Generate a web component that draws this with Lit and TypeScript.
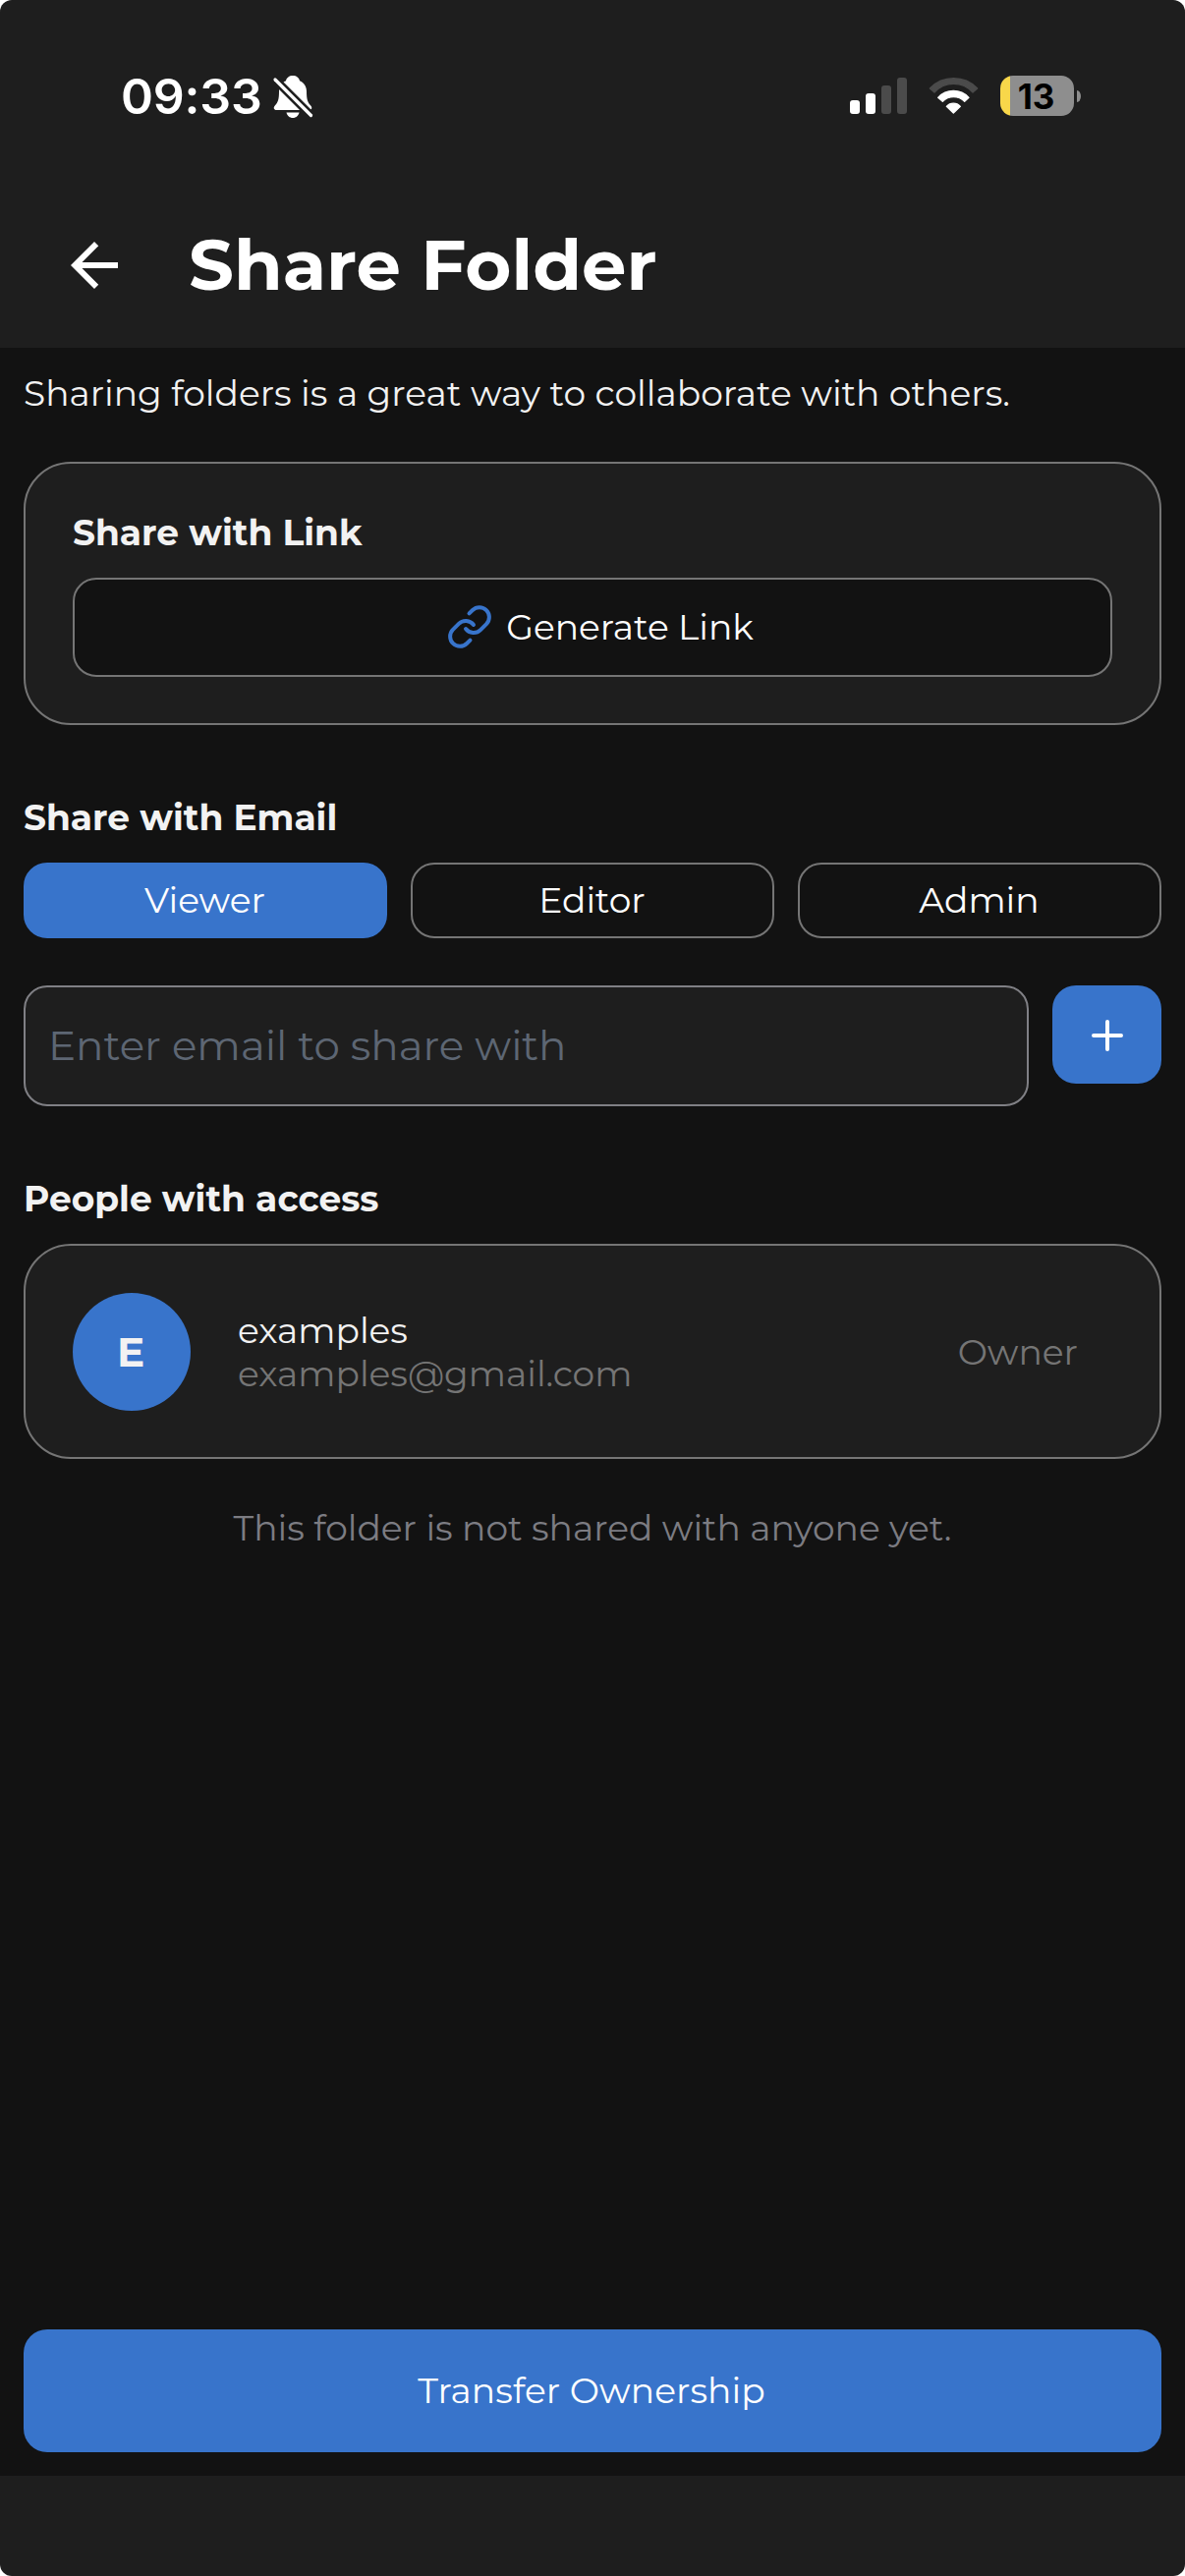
import { LitElement, html, svg, css } from "lit";
import { customElement, state } from "lit/decorators.js";

@customElement("app-root")
export class AppRoot extends LitElement {
  static styles = css`
    :host { display: block; }
    .page { height: 2622px; overflow: hidden; background: #fff; }
    .screen {
      box-sizing: border-box; width: 1206px; height: 2622px; display: flex; flex-direction: column;
      background: #1e1e1e; border-radius: 12px; overflow: hidden;
      font: 400 36px/44px "Montserrat", "Inter", sans-serif; color: #fff;
    }

    /* Status bar */
    .status {
      height: 194px; box-sizing: border-box; padding: 66px 106px 0 123px; flex: none;
      display: flex; align-items: flex-start; justify-content: space-between;
    }
    .clock { display: flex; align-items: center; height: 63px; }
    .time { font: 600 50px/63px "Inter", sans-serif; letter-spacing: -0.2px; width: 154px; padding-top: 2px; }
    .bell { display: block; width: 42px; height: 46px; }
    .indicators { display: flex; align-items: center; height: 63px; gap: 22px; }
    .indicators svg { display: block; }
    .power { display: flex; align-items: center; gap: 3px; }
    .battery {
      width: 75px; height: 41px; border-radius: 13px; display: flex; align-items: center; justify-content: center;
      background: linear-gradient(90deg, #f8d74a 0 10px, #8e8e8e 10px);
      font: 700 35px/41px "Inter", sans-serif; color: #000; box-sizing: border-box; padding: 1px 2px 0 0;
    }
    .nub { width: 4px; height: 12px; border-radius: 0 4px 4px 0 / 0 6px 6px 0; background: #8e8e8e; }

    /* Title bar */
    .header { height: 160px; flex: none; display: flex; align-items: flex-start; padding: 31px 60px 0; gap: 60px; box-sizing: border-box; }
    .back { width: 72px; height: 72px; margin-top: 9px; display: block; }
    h1 { margin: 0; font: inherit; font-weight: 700; font-size: 72px; line-height: 88px; }

    /* Content */
    main { flex: 1; display: flex; flex-direction: column; background: #121212; padding: 24px; min-height: 0; }
    .intro, h2 { color: #f2f2f2; }
    .intro { margin: 0 0 48px; letter-spacing: 0.03px; }
    h2 { margin: 0 0 24px; font: inherit; font-weight: 700; }
    .card { box-sizing: border-box; border: 2px solid #757575; border-radius: 48px; background: #1e1e1e; padding: 48px; }
    .linkcard { height: 268px; margin-bottom: 72px; }
    .pill {
      box-sizing: border-box; display: flex; align-items: center; justify-content: center;
      border: 2px solid #757575; border-radius: 24px; background: #121212; color: #fff; padding-bottom: 2px;
    }
    .generate { height: 101px; gap: 13px; padding-left: 15px; }
    .generate svg { width: 48px; height: 48px; display: block; }
    .roles { display: grid; grid-template-columns: repeat(3, 1fr); gap: 24px; margin-bottom: 48px; }
    .role { height: 77px; padding-right: 1px; }
    .role.on { background: #3874cb; border-color: #3874cb; }
    .invite { display: flex; gap: 24px; align-items: flex-start; margin-bottom: 72px; }
    .field {
      flex: 1; box-sizing: border-box; height: 123px; border: 2px solid #808085; border-radius: 24px;
      background: #1e1e1e; padding: 0 23px 2px; display: flex; align-items: center; font-size: 42px; color: #5d6673;
    }
    .add {
      width: 111px; height: 100px; border-radius: 24px; background: #3874cb;
      display: flex; align-items: center; justify-content: center; padding-top: 1px; box-sizing: border-box;
    }
    .add svg { width: 48px; height: 48px; display: block; }
    .person { display: flex; align-items: center; height: 219px; padding: 0 83px 0 48px; }
    .avatar {
      width: 120px; height: 120px; border-radius: 50%; background: #3874cb; color: #f2f2f2; margin-right: 48px;
      display: flex; align-items: center; justify-content: center; font-size: 42px; font-weight: 700;
      box-sizing: border-box; padding-right: 2px;
    }
    .who { flex: 1; }
    .name { color: #f2f2f2; }
    .mail, .owner { color: #757575; }
    .empty { margin: 48px 0 0; text-align: center; color: #7c7c82; }
    .transfer { margin-top: auto; height: 125px; border: 0; background: #3874cb; flex: none; padding-right: 2px; letter-spacing: 0.08px; }
    .home { height: 102px; flex: none; }
  `;

  @state() private role = "Viewer";

  private bars = [[14, 1], [21, 1], [29, 0], [37, 0]];

  render() {
    return html`
      <div class="page"><div class="screen">
        <div class="status">
          <div class="clock">
            <span class="time">09:33</span>
            <svg class="bell" viewBox="0 0 42 46">
              <path fill="#fff" d="M21 2c-3.700 0-6.300 2-7 5.200C9.500 9 7 13 7 18c0 8-1 11-4.200 14.500C1 34.500 1.500 37 4.500 37h33c3 0 3.500-2.500 1.700-4.500C36 29 35 26 35 18c0-5-2.500-9-7-10.800C27.300 4 24.700 2 21 2z" />
              <path fill="#fff" d="M14.500 39.500h13c-.8 3.300-3.300 5.500-6.500 5.500s-5.700-2.200-6.500-5.500z" />
              <path stroke="#1e1e1e" stroke-width="8.500" stroke-linecap="round" d="M3 6l36.500 36.500" />
              <path stroke="#fff" stroke-width="3.200" stroke-linecap="round" d="M3 6l36.500 36.500" />
            </svg>
          </div>
          <div class="indicators">
            <svg width="58" height="37" viewBox="0 0 58 37">
              ${this.bars.map(([h, on], i) => svg`<rect x=${i * 16} y=${37 - h} width="10" height=${h} rx="3" fill=${on ? "#fff" : "#4b4b4b"} />`)}
            </svg>
            <svg width="51" height="37" viewBox="316 87 151 111">
              <path fill="#4b4b4b" stroke="#4b4b4b" stroke-width="4" stroke-linejoin="round" d="M319 120A101 101 0 0 1 464 120L450 132A79 79 0 0 0 333 132Z" />
              <path fill="#fff" stroke="#fff" stroke-width="4" stroke-linejoin="round" d="M344 148A64 64 0 0 1 438 148L425 160A47 47 0 0 0 358 160Z" />
              <path fill="#fff" stroke="#fff" stroke-width="4" stroke-linejoin="round" d="M370 175A28 28 0 0 1 412 175L391 195Z" />
            </svg>
            <div class="power"><div class="battery">13</div><div class="nub"></div></div>
          </div>
        </div>
        <div class="header">
          <svg class="back" viewBox="0 0 24 24" fill="#fff"><path d="M20 11H7.830l5.590-5.590L12 4l-8 8 8 8 1.410-1.410L7.830 13H20v-2z" /></svg>
          <h1>Share Folder</h1>
        </div>
        <main>
          <p class="intro">Sharing folders is a great way to collaborate with others.</p>
          <section class="card linkcard">
            <h2>Share with Link</h2>
            <div class="pill generate">
              <svg viewBox="0 0 24 24" fill="none" stroke="#3874cb" stroke-width="2" stroke-linecap="round" stroke-linejoin="round">
                <path d="M10 13a5 5 0 0 0 7.540.540l3-3a5 5 0 0 0-7.070-7.070l-1.720 1.710" />
                <path d="M14 11a5 5 0 0 0-7.540-.540l-3 3a5 5 0 0 0 7.070 7.070l1.710-1.710" />
              </svg>
              <span>Generate Link</span>
            </div>
          </section>
          <h2>Share with Email</h2>
          <div class="roles">
            ${["Viewer", "Editor", "Admin"].map((r) => html`<div class="pill role ${r === this.role ? "on" : ""}" @click=${() => (this.role = r)}>${r}</div>`)}
          </div>
          <div class="invite">
            <div class="field">Enter email to share with</div>
            <div class="add"><svg viewBox="0 0 24 24" fill="none" stroke="#fff" stroke-width="2" stroke-linecap="round"><path d="M12 5v14M5 12h14" /></svg></div>
          </div>
          <h2>People with access</h2>
          <section class="card person">
            <div class="avatar">E</div>
            <div class="who"><div class="name">examples</div><div class="mail">examples@gmail.com</div></div>
            <div class="owner">Owner</div>
          </section>
          <p class="empty">This folder is not shared with anyone yet.</p>
          <div class="pill transfer">Transfer Ownership</div>
        </main>
        <div class="home"></div>
      </div></div>
    `;
  }
}
